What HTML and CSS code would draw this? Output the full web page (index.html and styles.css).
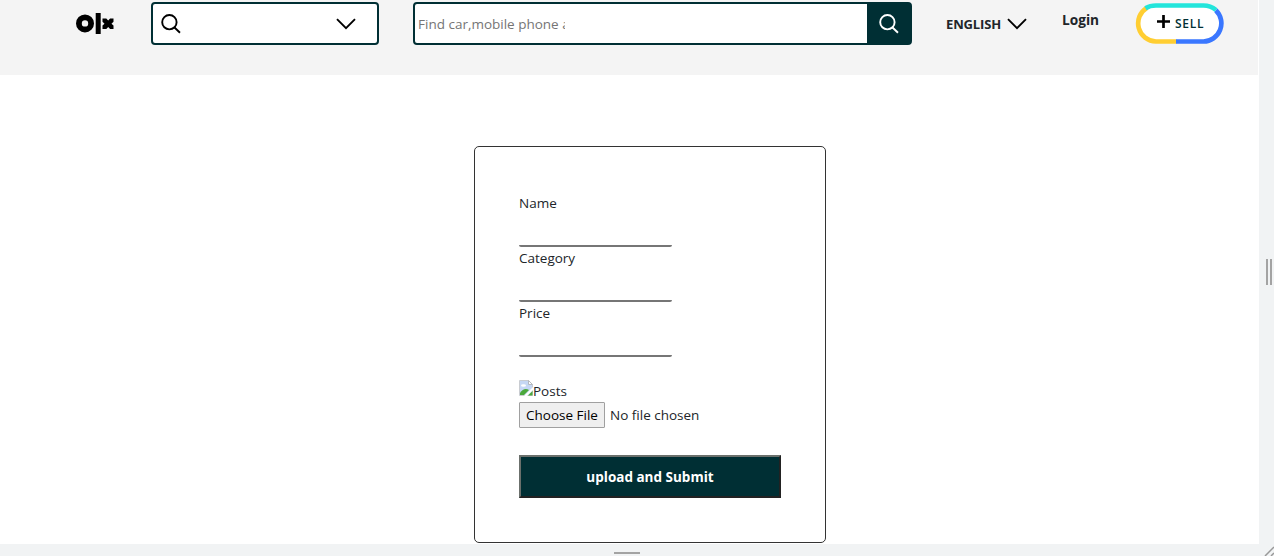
FILE: index.html
```html
<!DOCTYPE html>
<html lang="en">
<head>
<meta charset="utf-8">
<title>OLX</title>
<link rel="stylesheet" href="styles.css">
</head>
<body>
<div class="frame">
  <div class="viewport">
    <header class="header">
      <svg class="logo" viewBox="0 0 40 24" aria-label="olx">
        <circle cx="10" cy="12.4" r="6.1" fill="none" stroke="#000" stroke-width="5.8"/>
        <path d="M20.700 2h5v21h-5z"/>
        <path d="M28 7.500h3.300l1.900 2 1.900-2H38.500v3.300l-2 1.900 2 1.900V18H35.100l-1.900-2-1.900 2H27.500v-3.400l2-1.900-2-1.900V7.500z"/>
      </svg>
      <div class="place">
        <svg class="icon" viewBox="0 0 20 20"><circle cx="8.4" cy="8.2" r="7.2"/><path d="M13.5 13.5 19 18.7"/></svg>
        <svg class="chevron" viewBox="0 0 20 12"><path d="M1 1.2 10 10.2 19 1.2"/></svg>
      </div>
      <div class="search">
        <div class="query"><span class="placeholder">Find car,mobile phone and more...</span></div>
        <div class="go"><svg class="icon white" viewBox="0 0 20 20"><circle cx="8.4" cy="8.2" r="7.2"/><path d="M13.5 13.5 19 18.7"/></svg></div>
      </div>
      <div class="language"><span class="lang-text">ENGLISH</span><svg class="chevron" viewBox="0 0 20 12"><path d="M1 1.2 10 10.2 19 1.2"/></svg></div>
      <span class="login">Login</span>
      <div class="sell">
        <svg class="ring" viewBox="0 0 89 41">
          <rect x="2" y="2" width="85" height="37" rx="18.5" fill="#fff"/>
          <path d="M12 4.700A18.200 18.200 0 0 0 21 38.500H41.500" stroke="#ffce32"/>
          <path d="M41 38.500H68.500A18.200 18.200 0 0 0 80.800 7.200" stroke="#3a77ff"/>
          <path d="M10.500 5.200Q15 2.500 21 2.500H68.500Q75.500 2.500 81 7" stroke="#23e5db"/>
        </svg>
        <div class="sell-label">
          <svg class="plus" viewBox="0 0 13 13"><path d="M6.500 .5v12M.5 6.500h12"/></svg>
          <span>SELL</span>
        </div>
      </div>
    </header>
    <main class="card">
      <label class="label">Name</label>
      <div class="field"></div>
      <label class="label">Category</label>
      <div class="field"></div>
      <label class="label">Price</label>
      <div class="field"></div>
      <div class="preview">
        <svg class="broken" viewBox="0 0 14 16">
          <path d="M.5.5h9l4 4v11H.5z" fill="#c5d7f4" stroke="#c9ccd1"/>
          <path d="M9.500.5v4h4z" fill="#fff" stroke="#b5b9bf"/>
          <ellipse cx="4.500" cy="5.500" rx="2.500" ry="1.300" fill="#fff"/>
          <path d="M1 15v-2Q5 7 10 10l-5 5z" fill="#4ba83b"/>
          <path d="M14 7v3L8 16H5z" fill="#fff"/>
          <path d="M9 15.500 13.500 11v4.500z" fill="#4ba83b"/>
        </svg>
        <span>Posts</span>
      </div>
      <div class="file"><span class="choose">Choose File</span><span class="none">No file chosen</span></div>
      <button class="submit">upload and Submit</button>
    </main>
  </div>
  <div class="side"><i class="grip"></i><i class="grip"></i></div>
  <div class="bottom"><i class="grip-flat"></i></div>
  <div class="corner"><svg viewBox="0 0 15 12" class="resize"><path d="M6 12 15 3M12 12l3-3"/></svg></div>
</div>
</body>
</html>
```
FILE: styles.css
```css
* { box-sizing: border-box; }
body {
  margin: 0;
  overflow: hidden;
  font-family: "Open Sans", "Noto Sans", sans-serif;
  font-size: 13.5px;
  color: #212529;
}
svg { display: block; flex: none; }
.frame {
  display: grid;
  grid-template: 544px 12px / 1259px 15px;
  width: 1274px;
  height: 556px;
  background: #f1f3f4;
}
.viewport { background: #fff; overflow: hidden; }
.header {
  display: flex;
  align-items: flex-start;
  width: 1258px;
  height: 75px;
  padding-left: 75px;
  background: #f4f4f4;
}
.logo { width: 40px; height: 24px; margin-top: 11px; }
.place {
  display: flex;
  align-items: center;
  justify-content: space-between;
  width: 228px;
  height: 43px;
  margin: 2px 0 0 36px;
  padding: 0 21px 0 8px;
  border: 2px solid #002f34;
  border-radius: 4px;
  background: #fff;
}
.icon {
  width: 20px;
  height: 20px;
  fill: none;
  stroke: #000;
  stroke-width: 1.9;
}
.white { stroke: #fff; }
.chevron {
  width: 20px;
  height: 12px;
  fill: none;
  stroke: #000;
  stroke-width: 1.9;
}
.search {
  display: flex;
  width: 499px;
  height: 43px;
  margin: 2px 0 0 34px;
  border: 2px solid #002f34;
  border-radius: 4px;
  background: #fff;
}
.query { flex: 1; padding: 10px 3px; }
.placeholder {
  display: block;
  width: 147px;
  overflow: hidden;
  white-space: nowrap;
  line-height: 20px;
  color: #757575;
}
.go {
  display: flex;
  align-items: center;
  justify-content: center;
  width: 43px;
  background: #002f34;
}
.language {
  display: flex;
  align-items: center;
  width: 81px;
  height: 20px;
  margin: 14px 0 0 34px;
  justify-content: space-between;
  font-size: 13px;
  font-weight: 700;
}
.lang-text { letter-spacing: -.15px; }
.login {
  width: 38px;
  margin: 10px 0 0 35px;
  line-height: 20px;
  font-size: 13.7px;
  font-weight: 700;
}
.sell { position: relative; width: 89px; height: 41px; margin: 3px 0 0 35px; }
.ring { width: 89px; height: 41px; fill: none; stroke-width: 4.7; }
.sell-label {
  position: absolute;
  inset: 0;
  display: flex;
  gap: 5px;
  padding: 12px 0 0 22px;
  line-height: 18px;
  font-size: 12px;
  font-weight: 600;
  letter-spacing: .7px;
  color: #002f34;
}
.plus { width: 13px; height: 13px; stroke: #000; stroke-width: 2.7; stroke-linecap: round; }
.card {
  width: 352px;
  height: 397px;
  margin: 71px 0 0 474px;
  padding: 45px 44px 43px;
  border: 1px solid #333;
  border-radius: 5px;
}
.label { display: block; line-height: 22px; }
.field {
  width: 153px;
  height: 33px;
  border-bottom: 2px solid #767676;
  border-radius: 2px;
}
.preview {
  display: flex;
  height: 22px;
  margin-top: 23px;
  line-height: 22px;
}
.broken { width: 14px; height: 16px; }
.file {
  display: flex;
  align-items: center;
  gap: 5px;
  height: 26px;
}
.choose {
  width: 86px;
  height: 26px;
  border: 1px solid #a0a0a0;
  border-radius: 1px;
  background: #efefef;
  line-height: 24px;
  text-align: center;
  color: #000;
}
.submit {
  display: block;
  width: 262px;
  height: 43px;
  margin-top: 27px;
  padding: 0;
  border: 2px solid;
  border-color: #6b706c #222 #222 #6b706c;
  background: #002f34;
  color: #fff;
  font: 700 13.5px "Open Sans", "Noto Sans", sans-serif;
}
.side { display: flex; align-items: center; gap: 2px; padding-left: 7px; }
.grip { width: 2px; height: 26px; background: #a3a3a3; }
.bottom { padding: 8px 0 0 614px; }
.grip-flat { display: block; width: 26px; height: 2px; background: #a3a3a3; }
.resize { width: 15px; height: 12px; fill: none; stroke: #999; stroke-width: 1.5; }
```
